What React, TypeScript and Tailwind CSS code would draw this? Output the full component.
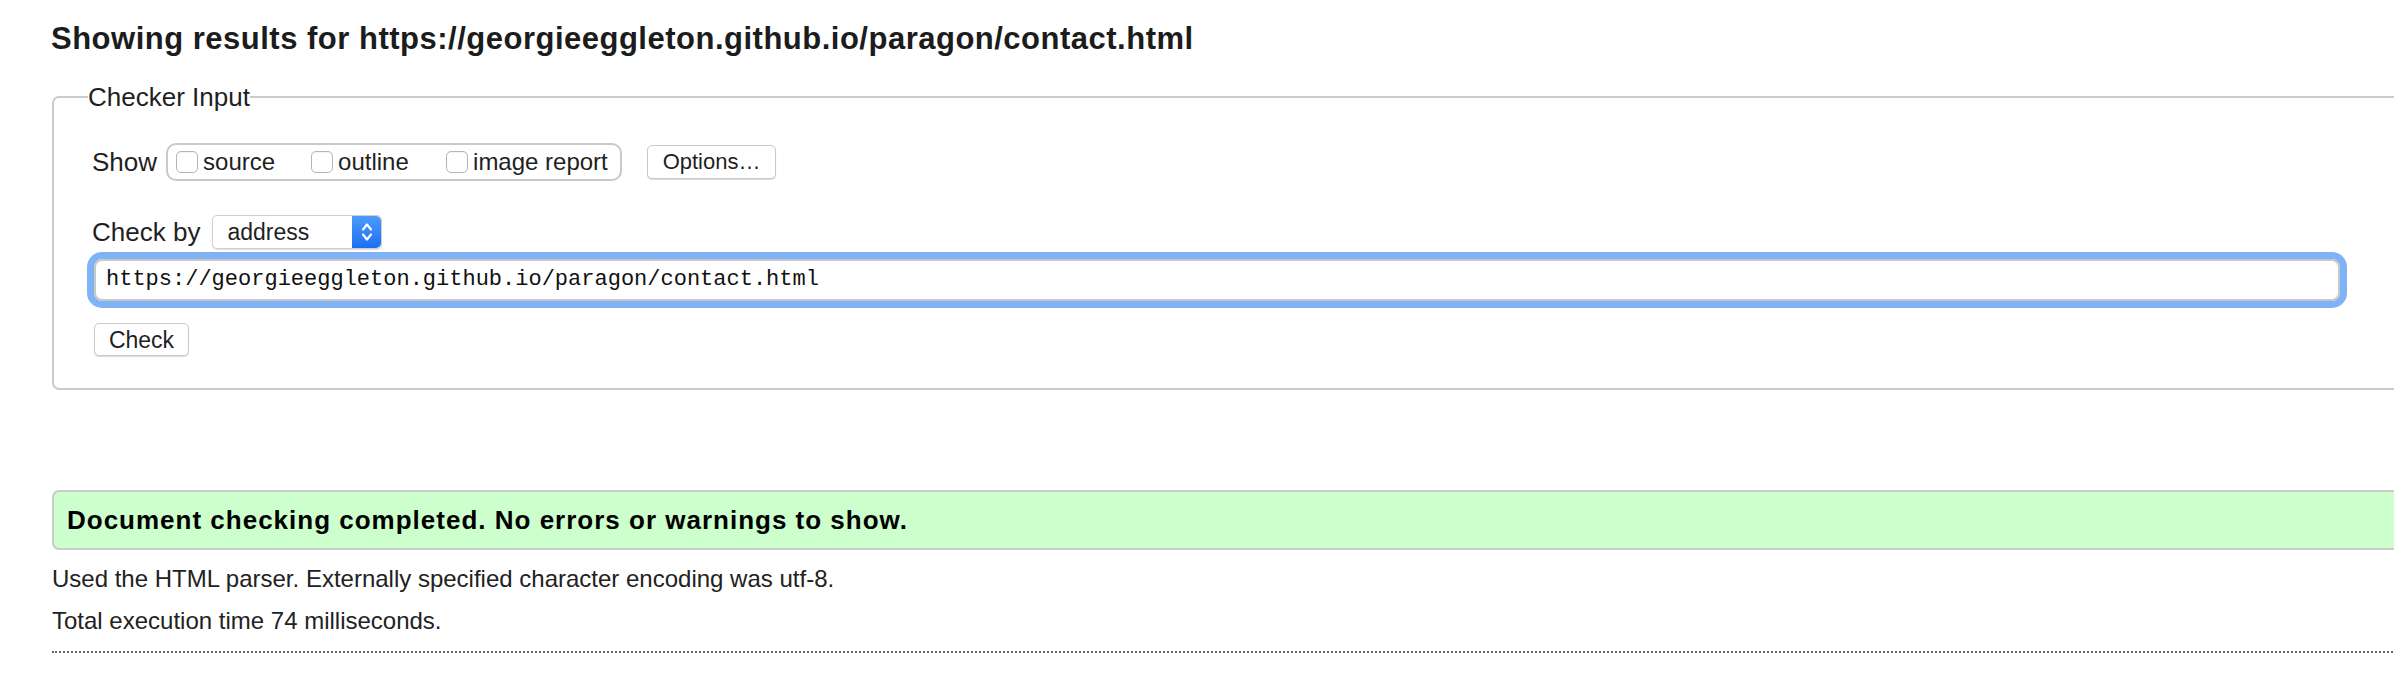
// Nu Html Checker — result page for a single address
const sans = { fontFamily: '"Liberation Sans", Arial, sans-serif' };

function Checkbox({ label, last }: { label: string; last?: boolean }) {
  return (
    <label className={`flex items-center ${last ? '' : 'w-[135px]'}`}>
      <span className="w-[22px] h-[22px] rounded-[5px] border border-[#b5b5b5] bg-white shadow-[inset_0_1px_1px_rgba(0,0,0,0.05)]" />
      <span className="ml-[5px] text-[24px] leading-[28px] text-[#1f1f1f]">{label}</span>
    </label>
  );
}

function SelectArrows() {
  return (
    <span className="w-[29px] h-full rounded-r-[5px] bg-gradient-to-b from-[#4c9bfa] to-[#1b6ef3] flex items-center justify-center">
      <svg width="14" height="24" viewBox="0 0 14 24" fill="none" stroke="white" strokeWidth="2.2" strokeLinecap="round" strokeLinejoin="round">
        <path d="M3 9.5 L7 4.5 L11 9.5" />
        <path d="M3 14.5 L7 19.5 L11 14.5" />
      </svg>
    </span>
  );
}

export default function App() {
  return (
    <div className="w-[2394px] h-[676px] overflow-hidden bg-white pl-[52px] text-[#1f1f1f]" style={sans}>
      <h2 className="mt-[21px] -ml-px text-[31px] leading-[36px] font-bold tracking-[0.5px] text-[#1c1c1c]">
        Showing results for https://georgieeggleton.github.io/paragon/contact.html
      </h2>

      {/* Checker Input */}
      <fieldset className="mt-[25px] w-[2380px] border-2 border-[#cbcbcb] rounded-[7px] pl-[38px] pt-[31px] pb-[32px]">
        <legend className="-ml-[4px] text-[26px] leading-[30px] text-[#1f1f1f]">Checker Input</legend>

        <div className="flex items-center h-[38px]">
          <span className="text-[26px] leading-[30px]">Show</span>
          <div className="ml-[9px] h-[38px] w-[456px] flex items-center border-2 border-[#c9c9c9] rounded-[10px] pl-[8px]">
            <Checkbox label="source" />
            <Checkbox label="outline" />
            <Checkbox label="image report" last />
          </div>
          <button className="ml-[25px] h-[34px] w-[129px] rounded-[5px] border border-[#cacaca] bg-white shadow-[0_1px_1px_rgba(0,0,0,0.15)] text-[22px] leading-[26px] text-[#1f1f1f]">
            Options…
          </button>
        </div>

        <div className="flex items-center h-[34px] mt-[34px]">
          <span className="text-[26px] leading-[30px]">Check by</span>
          <div className="ml-[12px] h-[34px] w-[170px] flex items-stretch rounded-[5px] border border-[#cfcfcf] bg-white shadow-[0_1px_1px_rgba(0,0,0,0.12)]">
            <span className="flex-1 pl-[14px] text-[23px] leading-[32px] text-[#1f1f1f]">address</span>
            <SelectArrows />
          </div>
        </div>

        <div className="mt-[10px] ml-[2px] w-[2246px] h-[42px] rounded-[8px] border-2 border-[#c8c8c8] outline-[7px] outline-solid outline-[#7fb3f5] bg-white flex items-center pl-[10px]">
          <span className="text-[22px] leading-[26px] text-[#111]" style={{ fontFamily: '"Liberation Mono", "DejaVu Sans Mono", monospace' }}>
            https://georgieeggleton.github.io/paragon/contact.html
          </span>
        </div>

        <button className="mt-[22px] ml-[2px] block h-[33px] w-[95px] rounded-[5px] border border-[#cacaca] bg-white shadow-[0_1px_1px_rgba(0,0,0,0.15)] text-[23px] leading-[26px] text-[#1f1f1f]">
          Check
        </button>
      </fieldset>

      {/* Result */}
      <div className="mt-[100px] w-[2380px] h-[60px] border-2 border-[#cbcbcb] rounded-[7px] bg-[#ccffcc] pl-[13px] flex items-center">
        <p className="text-[26px] leading-[30px] font-bold tracking-[1px] text-black">
          Document checking completed. No errors or warnings to show.
        </p>
      </div>

      <p className="mt-[15px] text-[24px] leading-[28px] text-[#222]">
        Used the HTML parser. Externally specified character encoding was utf-8.
      </p>
      <p className="mt-[14px] text-[24px] leading-[28px] text-[#222]">Total execution time 74 milliseconds.</p>
      <div className="mt-[16px] w-[2380px] border-t-2 border-dotted border-[#666]" />
    </div>
  );
}
